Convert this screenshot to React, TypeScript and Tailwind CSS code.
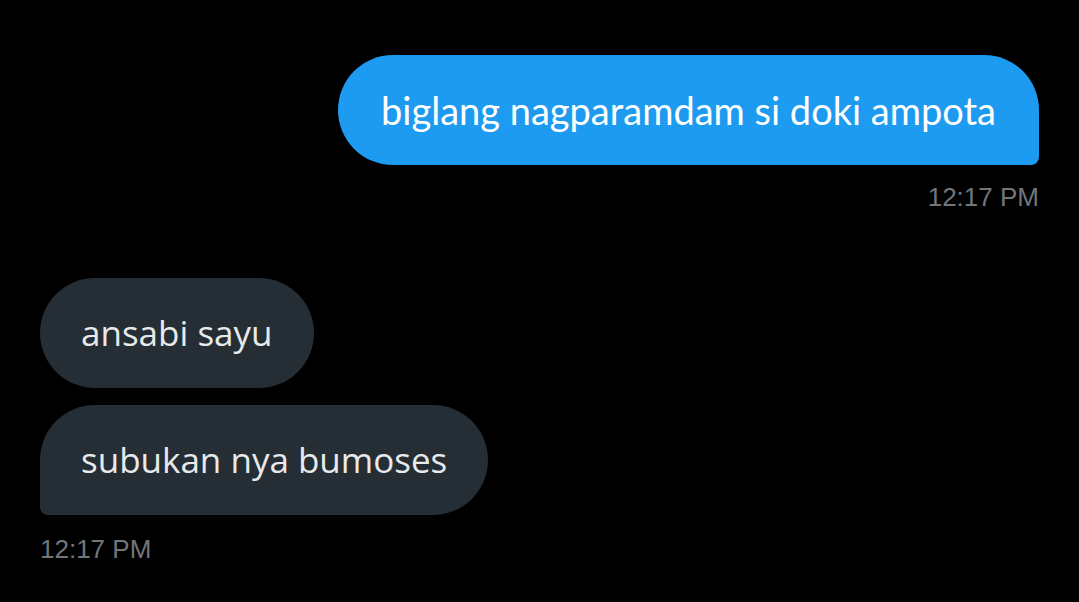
type Bubble = { text: string; corner: string }

const sent: Bubble[] = [
  { text: "biglang nagparamdam si doki ampota", corner: "rounded-br-[8px]" },
]

const received: Bubble[] = [
  { text: "ansabi sayu", corner: "" },
  { text: "subukan nya bumoses", corner: "rounded-bl-[8px]" },
]

export default function App() {
  return (
    <div className="flex min-h-[602px] w-full flex-col bg-black px-[40px] pt-[55px]">
      {/* outgoing group */}
      <div className="flex flex-col items-end">
        {sent.map(m => (
          <div
            key={m.text}
            className={`flex h-[110px] items-center rounded-[55px] bg-[#1d9bf0] px-[43px] font-['Lato',sans-serif] text-[38px] text-white ${m.corner}`}
          >
            {m.text}
          </div>
        ))}
        <span className="mt-[19px] font-['Liberation_Sans',sans-serif] text-[26px] leading-none text-[#71767b]">
          12:17 PM
        </span>
      </div>

      {/* incoming group */}
      <div className="mt-[68px] flex flex-col items-start gap-[17px]">
        {received.map(m => (
          <div
            key={m.text}
            className={`flex h-[110px] items-center rounded-[55px] bg-[#252d35] px-[41px] font-['Open_Sans',sans-serif] text-[35px] text-[#e7e9ea] ${m.corner}`}
          >
            {m.text}
          </div>
        ))}
      </div>
      <span className="mt-[21px] font-['Liberation_Sans',sans-serif] text-[26px] leading-none text-[#71767b]">
        12:17 PM
      </span>
    </div>
  )
}
